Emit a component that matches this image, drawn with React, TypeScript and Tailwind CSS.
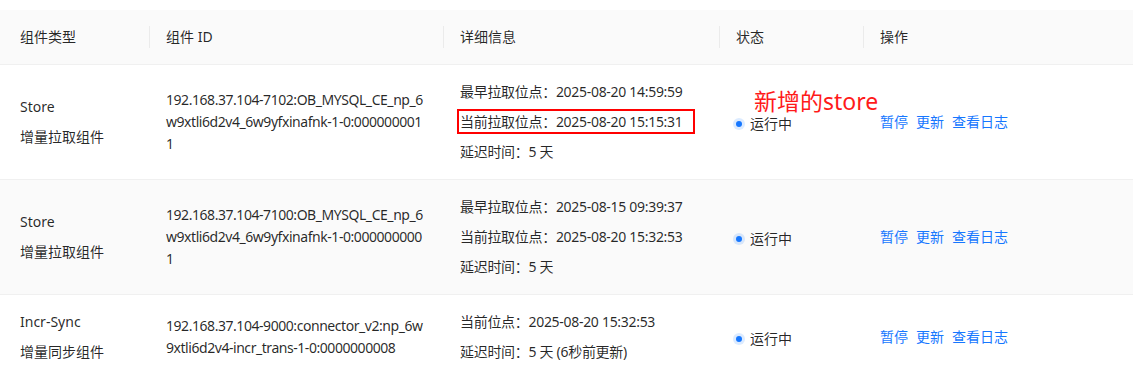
import React from 'react';

type Row = {
  name: string;
  kind: string;
  idLines: string[];
  details: string[];
  marked?: boolean;
  hover?: boolean;
};

// ID column wraps mid-token, same as the source table
const rows: Row[] = [
  {
    name: 'Store',
    kind: '增量拉取组件',
    idLines: ['192.168.37.104-7102:OB_MYSQL_CE_np_6', 'w9xtli6d2v4_6w9yfxinafnk-1-0:000000001', '1'],
    details: ['最早拉取位点：2025-08-20 14:59:59', '当前拉取位点：2025-08-20 15:15:31', '延迟时间：5 天'],
    marked: true,
  },
  {
    name: 'Store',
    kind: '增量拉取组件',
    idLines: ['192.168.37.104-7100:OB_MYSQL_CE_np_6', 'w9xtli6d2v4_6w9yfxinafnk-1-0:000000000', '1'],
    details: ['最早拉取位点：2025-08-15 09:39:37', '当前拉取位点：2025-08-20 15:32:53', '延迟时间：5 天'],
    hover: true,
  },
  {
    name: 'Incr-Sync',
    kind: '增量同步组件',
    idLines: ['192.168.37.104-9000:connector_v2:np_6w', '9xtli6d2v4-incr_trans-1-0:0000000008'],
    details: ['当前位点：2025-08-20 15:32:53', '延迟时间：5 天 (6秒前更新)'],
  },
];

const headers = ['组件类型', '组件 ID', '详细信息', '状态', '操作'];

export default function App() {
  return (
    <div className="w-[1144px] h-[376px] overflow-hidden bg-white pt-[10px] font-['Noto_Sans','Noto_Sans_CJK_SC',sans-serif] text-[14px] leading-[22px] text-[rgba(0,0,0,0.85)]">
      <table className="w-[1133px] table-fixed border-collapse">
        <colgroup>
          <col className="w-[150px]" />
          <col className="w-[294px]" />
          <col className="w-[276px]" />
          <col className="w-[144px]" />
          <col />
        </colgroup>
        <thead>
          <tr className="bg-[#fafafa] border-b border-[#f0f0f0]">
            {headers.map((h, i) => (
              <th key={h} className={`relative h-[54px] px-4 text-left font-normal ${i === 0 ? 'pl-5' : ''}`}>
                {h}
                {i < headers.length - 1 && (
                  <span className="absolute right-0 top-1/2 -translate-y-1/2 h-[22px] w-px bg-[#ebebeb]" />
                )}
              </th>
            ))}
          </tr>
        </thead>
        <tbody>
          {rows.map((r, ri) => (
            <tr key={ri} className={`border-b border-[#f0f0f0] ${r.hover ? 'bg-[#fafafa]' : ''}`}>
              <td className="px-4 py-4 pl-5 align-middle">
                <div className="flex flex-col gap-2">
                  <span>{r.name}</span>
                  <span>{r.kind}</span>
                </div>
              </td>
              <td className="px-4 py-4 align-middle tracking-[-0.45px]">
                {r.idLines.map((l, li) => (
                  <div key={li} className="whitespace-nowrap">{l}</div>
                ))}
              </td>
              <td className="px-4 py-4 align-middle tracking-[-0.3px]">
                <div className="flex flex-col gap-2">
                  {r.details.map((d, di) => (
                    <div key={di} className="relative">
                      {d}
                      {r.marked && di === 1 && (
                        <span className="absolute left-[-3px] top-[-2px] w-[238px] h-[25px] border-2 border-[#ff0000]" />
                      )}
                    </div>
                  ))}
                </div>
              </td>
              <td className="relative px-4 py-4 align-middle">
                <div className="flex items-center gap-2 pt-[4px]">
                  <span className="w-[6px] h-[6px] rounded-full bg-[#1677ff] ring-[3px] ring-[#1677ff]/15" />
                  <span className="leading-[18px]">运行中</span>
                </div>
                {r.marked && (
                  <span className="absolute left-[34px] top-[26px] text-[23px] leading-[20px] text-[#ff1a1a] whitespace-nowrap">
                    新增的store
                  </span>
                )}
              </td>
              <td className="px-4 py-4 align-middle">
                <div className="flex items-center gap-2 text-[#1677ff]">
                  <span>暂停</span>
                  <span>更新</span>
                  <span>查看日志</span>
                </div>
              </td>
            </tr>
          ))}
        </tbody>
      </table>
    </div>
  );
}
